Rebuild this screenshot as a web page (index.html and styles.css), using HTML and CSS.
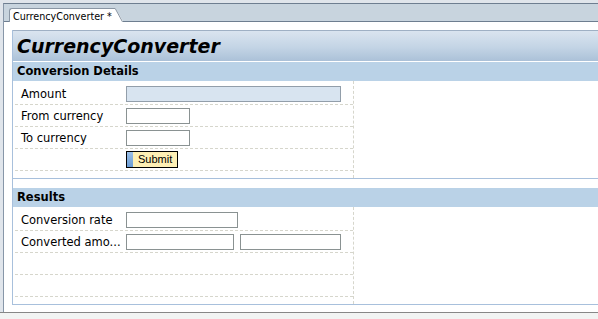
FILE: index.html
```html
<!DOCTYPE html>
<html>
  <head>
    <title>CurrencyConverter</title>
    <link rel="stylesheet" href="styles.css">
  </head>
  <body>
    <div class="editor">
      <div class="tab-bar">
        <div class="tab">
          <span class="tab-label">CurrencyConverter *</span>
          <svg class="tab-edge" width="10" height="14" viewBox="0 0 10 14">
            <polygon points="0,0 2,0 10,13 10,14 0,14" fill="#ffffff"/>
            <polyline points="0,0.5 2.2,0.5 9.6,14" fill="none" stroke="#8a96a4" stroke-width="1"/>
          </svg>
        </div>
      </div>
      <div class="editor-body">
        <div class="view">
          <div class="view-title">CurrencyConverter</div>
          <!-- input group -->
          <div class="group">
            <div class="group-header">Conversion Details</div>
            <div class="form">
              <div class="form-row">
                <div class="label">Amount</div>
                <input class="input input-readonly input-amount" readonly>
              </div>
              <div class="form-row">
                <div class="label">From currency</div>
                <input class="input input-code">
              </div>
              <div class="form-row">
                <div class="label">To currency</div>
                <input class="input input-code">
              </div>
              <div class="form-row">
                <div class="label"></div>
                <button class="button"><span class="button-mark"></span>Submit</button>
              </div>
            </div>
          </div>
          <!-- output group -->
          <div class="group">
            <div class="group-header">Results</div>
            <div class="form">
              <div class="form-row">
                <div class="label">Conversion rate</div>
                <input class="input input-rate">
              </div>
              <div class="form-row">
                <div class="label">Converted amo...</div>
                <input class="input input-result">
                <input class="input input-currency">
              </div>
              <div class="form-row"></div>
              <div class="form-row"></div>
            </div>
          </div>
        </div>
      </div>
    </div>
    <div class="status-bar"></div>
  </body>
</html>
```

FILE: styles.css
```css
body {
  margin: 0;
  background-color: #e0e5eb;
  font-family: "DejaVu Sans", sans-serif;
  color: #000000;
  height: 319px;
  overflow: hidden;
}

.editor {
  margin: 3px 0 0 3px;
  border-left: 1px solid #8796a8;
  border-top: 1px solid #6e7e90;
  background-color: #ffffff;
}

.tab-bar {
  height: 17px;
  background-color: #c8d4de;
  border-bottom: 1px solid #6e7e90;
  display: flex;
  align-items: flex-end;
  padding-left: 5px;
}

.tab {
  display: flex;
  margin-bottom: -1px;
}

.tab-label {
  height: 12px;
  padding: 1px 1px 0 3px;
  line-height: 13px;
  font-size: 9.6px;
  white-space: nowrap;
  background-color: #ffffff;
  border-top: 1px solid #8a96a4;
  border-left: 1px solid #8a96a4;
  border-top-left-radius: 3px;
}

.tab-edge {
  display: block;
}

.editor-body {
  padding: 8px 0 7px 8px;
}

.view {
  border-left: 1px solid #a8c0dc;
}

.view-title {
  height: 30px;
  line-height: 30px;
  padding-left: 4px;
  margin-bottom: 1px;
  border-top: 1px solid #9fb0c4;
  background-image: linear-gradient(#dae4ef, #c3d4e5 55%, #abc1d8);
  font-size: 19px;
  font-weight: bold;
  font-style: oblique;
}

.group {
  border-bottom: 1px solid #a8c0dc;
}

.group + .group {
  margin-top: 9px;
}

.group-header {
  height: 19px;
  line-height: 19px;
  padding-left: 4px;
  background-color: #bad2e7;
  font-size: 11.5px;
  font-weight: bold;
}

.form {
  width: 338px;
  margin-left: 2px;
  padding: 2px 0 7px;
  border-right: 1px dashed #d6d6cc;
}

.form-row {
  display: flex;
  align-items: center;
  height: 21px;
  border-bottom: 1px dashed #d6d6cc;
}

.label {
  width: 105px;
  padding-left: 6px;
  font-size: 11.5px;
  white-space: nowrap;
  overflow: hidden;
}

.input {
  box-sizing: border-box;
  height: 16px;
  margin: 0;
  padding: 0;
  border: 1px solid #8a9292;
  background-color: #ffffff;
}

.input-readonly {
  background-color: #d8e4f0;
  border-color: #929eaa;
}

.input-amount {
  width: 215px;
}

.input-code {
  width: 64px;
}

.input-rate {
  width: 112px;
}

.input-result {
  width: 108px;
}

.input-currency {
  width: 101px;
  margin-left: 6px;
}

.button {
  display: flex;
  align-items: stretch;
  height: 17px;
  margin: 0;
  padding: 0 5px 0 0;
  border: 1px solid #000000;
  background-color: #fdefb5;
  font-family: "Liberation Sans", Arial, sans-serif;
  font-size: 11px;
  line-height: 15px;
  color: #000000;
}

.button-mark {
  width: 6px;
  margin-right: 5px;
  background-image: linear-gradient(#9cc0e8, #6a9bd4);
}

.status-bar {
  height: 7px;
  border-top: 1px solid #878787;
  background-color: #f2f4f3;
}
```
